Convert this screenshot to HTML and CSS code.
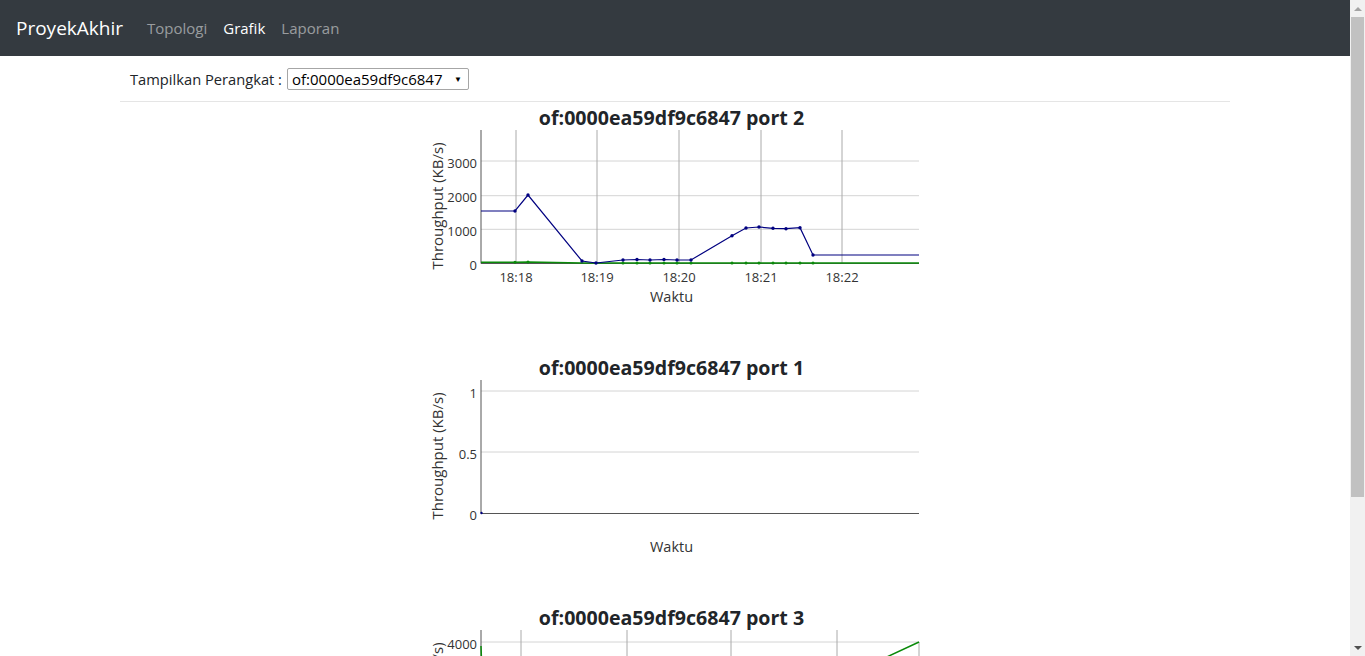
FILE: index.html
```html
<!DOCTYPE html>
<html lang="id">
<head>
<meta charset="utf-8">
<title>ProyekAkhir - Grafik</title>
<link rel="stylesheet" href="styles.css">
</head>
<body>
<div class="page">
  <div class="main">
    <nav class="navbar">
      <a class="brand" href="#">ProyekAkhir</a>
      <a class="nav-link" href="#">Topologi</a>
      <a class="nav-link active" href="#">Grafik</a>
      <a class="nav-link" href="#">Laporan</a>
    </nav>
    <div class="container">
      <div class="device-row">
        <label class="device-label" for="dev">Tampilkan Perangkat :</label>
        <span class="select-wrap">
          <select id="dev" class="device-select">
            <option>of:0000ea59df9c6847</option>
          </select>
          <span class="caret">&#9660;</span>
        </span>
      </div>
      <hr class="divider">

      <div class="chart">
        <svg width="500" height="250" viewBox="0 0 500 250">
          <text class="title" x="246.5" y="23">of:0000ea59df9c6847 port 2</text>
          <g class="grid-h">
            <line x1="56" y1="59" x2="494" y2="59"/>
            <line x1="56" y1="93.7" x2="494" y2="93.7"/>
            <line x1="56" y1="127.3" x2="494" y2="127.3"/>
          </g>
          <g class="grid-v">
            <line x1="91" y1="28" x2="91" y2="161"/>
            <line x1="172" y1="28" x2="172" y2="161"/>
            <line x1="254" y1="28" x2="254" y2="161"/>
            <line x1="336" y1="28" x2="336" y2="161"/>
            <line x1="417" y1="28" x2="417" y2="161"/>
          </g>
          <g class="axis">
            <line x1="56" y1="28" x2="56" y2="161.5"/>
            <line x1="56" y1="161.5" x2="494" y2="161.5"/>
          </g>
          <g class="ytick">
            <text x="52" y="66">3000</text>
            <text x="52" y="100">2000</text>
            <text x="52" y="133.5">1000</text>
            <text x="52" y="168">0</text>
          </g>
          <g class="xtick">
            <text x="91" y="180">18:18</text>
            <text x="172" y="180">18:19</text>
            <text x="254" y="180">18:20</text>
            <text x="336" y="180">18:21</text>
            <text x="417" y="180">18:22</text>
          </g>
          <text class="xlabel" x="246.5" y="200">Waktu</text>
          <text class="ylabel" transform="translate(18 104) rotate(-90)">Throughput (KB/s)</text>
          <polyline class="line-green" points="56,160.3 90,160.3 103,160 157,161 171,161 198,161 494,161"/>
          <g class="dots-green">
            <circle cx="90" cy="160.3" r="1.5"/><circle cx="103" cy="160" r="1.5"/>
            <circle cx="198" cy="161" r="1.5"/><circle cx="212" cy="161" r="1.5"/>
            <circle cx="225" cy="161" r="1.5"/><circle cx="239" cy="161" r="1.5"/>
            <circle cx="252" cy="161" r="1.5"/><circle cx="266" cy="161" r="1.5"/>
            <circle cx="307" cy="161" r="1.5"/><circle cx="321" cy="161" r="1.5"/>
            <circle cx="334" cy="161" r="1.5"/><circle cx="348" cy="161" r="1.5"/>
            <circle cx="361" cy="161" r="1.5"/><circle cx="375" cy="161" r="1.5"/>
            <circle cx="388" cy="161" r="1.5"/>
          </g>
          <polyline class="line-blue" points="56,109 90,109 103,93 157,159 171,161 198,158 212,157.5 225,158 239,157.5 252,158 266,158 307,133.7 321,126 334,125 348,126.3 361,126.7 375,125.7 388,153 494,153"/>
          <g class="dots-blue">
            <circle cx="90" cy="109" r="1.7"/><circle cx="103" cy="93" r="1.7"/>
            <circle cx="157" cy="159" r="1.7"/><circle cx="171" cy="161" r="1.7"/>
            <circle cx="198" cy="158" r="1.7"/><circle cx="212" cy="157.5" r="1.7"/>
            <circle cx="225" cy="158" r="1.7"/><circle cx="239" cy="157.5" r="1.7"/>
            <circle cx="252" cy="158" r="1.7"/><circle cx="266" cy="158" r="1.7"/>
            <circle cx="307" cy="133.7" r="1.7"/><circle cx="321" cy="126" r="1.7"/>
            <circle cx="334" cy="125" r="1.7"/><circle cx="348" cy="126.3" r="1.7"/>
            <circle cx="361" cy="126.7" r="1.7"/><circle cx="375" cy="125.7" r="1.7"/>
            <circle cx="388" cy="153" r="1.7"/>
          </g>
        </svg>
      </div>

      <div class="chart">
        <svg width="500" height="250" viewBox="0 0 500 250">
          <text class="title" x="246.5" y="23">of:0000ea59df9c6847 port 1</text>
          <g class="grid-h">
            <line x1="56" y1="39" x2="494" y2="39"/>
            <line x1="56" y1="100" x2="494" y2="100"/>
          </g>
          <g class="axis">
            <line x1="56" y1="28" x2="56" y2="161.5"/>
            <line x1="56" y1="161.5" x2="494" y2="161.5"/>
          </g>
          <g class="ytick">
            <text x="52" y="46">1</text>
            <text x="52" y="106.5">0.5</text>
            <text x="52" y="168">0</text>
          </g>
          <text class="xlabel" x="246.5" y="200">Waktu</text>
          <text class="ylabel" transform="translate(18 104) rotate(-90)">Throughput (KB/s)</text>
          <circle class="dot-start" cx="56.5" cy="161" r="1.2"/>
        </svg>
      </div>

      <div class="chart">
        <svg width="500" height="250" viewBox="0 0 500 250">
          <text class="title" x="246.5" y="23">of:0000ea59df9c6847 port 3</text>
          <g class="grid-h">
            <line x1="56" y1="40" x2="494" y2="40"/>
            <line x1="56" y1="70.3" x2="494" y2="70.3"/>
            <line x1="56" y1="100.5" x2="494" y2="100.5"/>
            <line x1="56" y1="130.8" x2="494" y2="130.8"/>
          </g>
          <g class="grid-v">
            <line x1="96" y1="28" x2="96" y2="161"/>
            <line x1="202" y1="28" x2="202" y2="161"/>
            <line x1="306" y1="28" x2="306" y2="161"/>
            <line x1="412" y1="28" x2="412" y2="161"/>
            <line x1="494" y1="40" x2="494" y2="161"/>
          </g>
          <g class="axis">
            <line x1="56" y1="28" x2="56" y2="161.5"/>
            <line x1="56" y1="161.5" x2="494" y2="161.5"/>
          </g>
          <g class="ytick">
            <text x="52" y="47">4000</text>
            <text x="52" y="77">3000</text>
            <text x="52" y="107">2000</text>
            <text x="52" y="137.5">1000</text>
            <text x="52" y="168">0</text>
          </g>
          <text class="xlabel" x="246.5" y="200">Waktu</text>
          <text class="ylabel" transform="translate(18 104) rotate(-90)">Throughput (KB/s)</text>
          <polyline class="line-green" points="56,44 60,160 235,160.5 494,40"/>
          <polyline class="line-blue" points="56,160 494,160.5"/>
        </svg>
      </div>
    </div>
  </div>
  <div class="scrollbar" aria-hidden="true">
    <div class="sb-btn"><span class="sb-arrow-up"></span></div>
    <div class="sb-track">
      <div class="sb-thumb"></div>
    </div>
    <div class="sb-btn"><span class="sb-arrow-down"></span></div>
  </div>
</div>
</body>
</html>
```
FILE: styles.css
```css
html, body {
  margin: 0;
  padding: 0;
  height: 100%;
  overflow: hidden;
}
body {
  font-family: "Open Sans", "Noto Sans", sans-serif;
  color: #212529;
  background: #fff;
}
.page {
  display: flex;
  height: 656px;
}
.main {
  flex: 1;
  min-width: 0;
  height: 656px;
  overflow: hidden;
}
.navbar {
  height: 56px;
  background: #343a40;
  display: flex;
  align-items: center;
  padding: 0 16px;
  box-sizing: border-box;
}
.brand {
  font-size: 19px;
  color: #fff;
  text-decoration: none;
  margin-right: 16px;
}
.nav-link {
  font-size: 15px;
  color: rgba(255, 255, 255, 0.5);
  text-decoration: none;
  padding: 0 8px;
}
.nav-link.active {
  color: #fff;
}
.container {
  width: 1110px;
  margin: 0 auto;
}
.device-row {
  display: flex;
  align-items: center;
  margin-top: 12px;
  padding-left: 10px;
  height: 22px;
}
.device-label {
  font-size: 14.7px;
  margin-right: 5px;
}
.select-wrap {
  position: relative;
  display: inline-block;
}
.device-select {
  -webkit-appearance: none;
  appearance: none;
  width: 182px;
  height: 22px;
  box-sizing: border-box;
  border: 1px solid #a6a6a6;
  border-radius: 2px;
  background: #fff;
  font-family: "Open Sans", "Noto Sans", sans-serif;
  font-size: 15px;
  color: #000;
  padding: 0 0 0 4px;
  margin: 0;
}
.caret {
  position: absolute;
  right: 7px;
  top: 5px;
  font-size: 8px;
  color: #000;
  pointer-events: none;
}
.divider {
  margin: 11px 0 0;
  border: 0;
  border-top: 1px solid rgba(0, 0, 0, 0.1);
  height: 0;
}
.chart {
  width: 500px;
  height: 250px;
  margin: 0 auto;
}
.chart svg {
  display: block;
}
.title {
  font-family: "Open Sans", "Noto Sans", sans-serif;
  font-weight: 700;
  font-size: 19.6px;
  fill: #212529;
  text-anchor: middle;
}
.grid-h line {
  stroke: #d4d4d4;
  stroke-width: 1;
}
.grid-v line {
  stroke: #aaaaaa;
  stroke-width: 1;
}
.axis line {
  stroke: #555;
  stroke-width: 1;
}
.ytick text {
  font-size: 13px;
  fill: #333;
  text-anchor: end;
}
.xtick text {
  font-size: 13px;
  fill: #333;
  text-anchor: middle;
}
.xlabel {
  font-size: 14.5px;
  fill: #333;
  text-anchor: middle;
}
.ylabel {
  font-size: 15px;
  fill: #333;
  text-anchor: middle;
}
.line-blue {
  fill: none;
  stroke: #000080;
  stroke-width: 1.2;
}
.line-green {
  fill: none;
  stroke: #0a8a0a;
  stroke-width: 1.5;
}
.dots-blue circle {
  fill: #000080;
}
.dots-green circle {
  fill: #0a8a0a;
}
.dot-start {
  fill: #000080;
}
.scrollbar {
  width: 15px;
  flex: none;
  height: 656px;
  background: #f1f1f1;
  display: flex;
  flex-direction: column;
}
.sb-btn {
  height: 17px;
  display: flex;
  align-items: center;
  justify-content: center;
  flex: none;
}
.sb-arrow-up {
  width: 0;
  height: 0;
  border-left: 4px solid transparent;
  border-right: 4px solid transparent;
  border-bottom: 4px solid #a3a3a3;
}
.sb-arrow-down {
  width: 0;
  height: 0;
  border-left: 4px solid transparent;
  border-right: 4px solid transparent;
  border-top: 4px solid #505050;
}
.sb-track {
  flex: 1;
  padding: 0 1px;
}
.sb-thumb {
  height: 480px;
  background: #c1c1c1;
}
```
